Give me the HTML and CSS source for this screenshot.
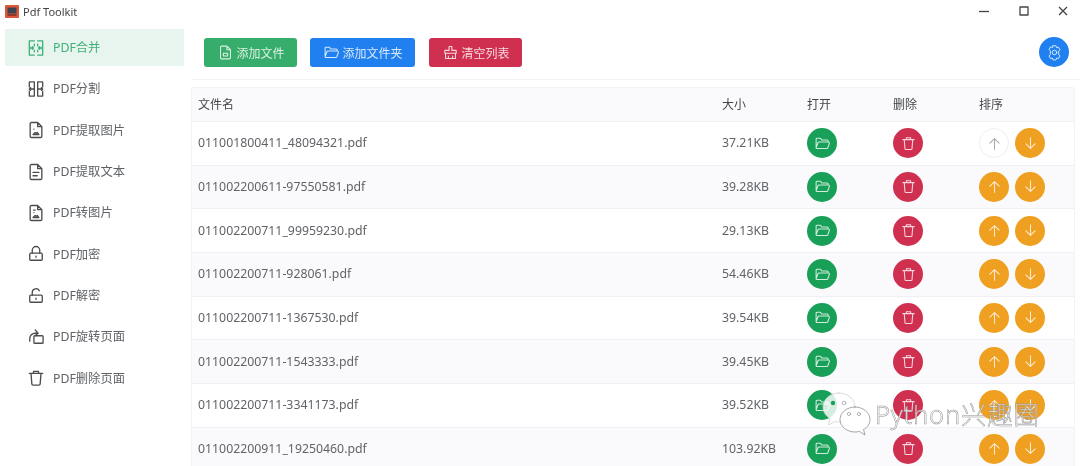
FILE: index.html
```html
<!DOCTYPE html>
<html lang="zh-CN">
<head>
<meta charset="utf-8">
<title>Pdf Toolkit</title>
<link rel="stylesheet" href="styles.css">
</head>
<body>
<svg class="defs" width="0" height="0">
  <symbol id="i-folder" viewBox="0 0 24 24"><path d="M3 18V6a1.5 1.5 0 0 1 1.5-1.5h4.2L11 7h7.5A1.5 1.5 0 0 1 20 8.5V10M3 18l2.6-7a1.5 1.5 0 0 1 1.4-1h13.5a1.3 1.3 0 0 1 1.2 1.8L19.500 18a1.600 1.600 0 0 1-1.500 1H4a1 1 0 0 1-1-1z"/></symbol>
  <symbol id="i-trash" viewBox="0 0 24 24"><path d="M4 6.500h16M9 6.500V4h6v2.500M6 6.500 7 19a1.500 1.500 0 0 0 1.500 1.500h7A1.500 1.500 0 0 0 17 19l1-12.500"/></symbol>
  <symbol id="i-up" viewBox="0 0 24 24"><path d="M12 20V5M5.500 11.500 12 5l6.500 6.500"/></symbol>
  <symbol id="i-down" viewBox="0 0 24 24"><path d="M12 4v15M5.500 12.500 12 19l6.500-6.500"/></symbol>
  <symbol id="i-file" viewBox="0 0 24 24"><path d="M14 3H6.500A1.500 1.500 0 0 0 5 4.500v15A1.500 1.500 0 0 0 6.500 21h11a1.500 1.500 0 0 0 1.500-1.500V8zM14 3v5h5"/></symbol>
</svg>

<div class="titlebar">
  <svg class="logo" viewBox="0 0 14 13"><rect width="14" height="13" rx="1" fill="#d9583c"/><rect x="2.500" y="2.500" width="9" height="6" fill="#3c4450"/><rect x="2.500" y="9" width="9" height="2" fill="#8d3a2c"/></svg>
  <span class="app-name">Pdf Toolkit</span>
  <div class="win-controls">
    <svg viewBox="0 0 10 10"><path d="M0 5.500h10"/></svg>
    <svg viewBox="0 0 10 10"><rect x="1" y="1" width="8" height="8"/></svg>
    <svg viewBox="0 0 10 10"><path d="M1 1l8 8M9 1l-8 8"/></svg>
  </div>
</div>

<div class="app">
  <nav class="sidebar">
    <a class="menu-item active">
      <svg class="menu-icon" viewBox="0 0 24 24"><path d="M10 3.500H4v17h6M14 3.500h6v17h-6M10 7.500v2M10 14.500v2M14 7.500v2M14 14.500v2M4 12h5M7.500 10.500 9 12l-1.500 1.500M20 12h-5M16.500 10.500 15 12l1.500 1.500"/></svg>
      <span>PDF合并</span>
    </a>
    <a class="menu-item">
      <svg class="menu-icon" viewBox="0 0 24 24"><path d="M10 3.500H4v6M4 14.500v6h6M14 3.500h6v6M20 14.500v6h-6M10 3.500v17M14 3.500v17M10 12H4M5.500 10.500 4 12l1.500 1.500M14 12h6M18.500 10.500 20 12l-1.500 1.500"/></svg>
      <span>PDF分割</span>
    </a>
    <a class="menu-item">
      <svg class="menu-icon" viewBox="0 0 24 24"><use href="#i-file"/><path d="M8.500 17.500l2.500-2.500 1.500 1 1-1 2 2.500zM9.500 11h.01"/></svg>
      <span>PDF提取图片</span>
    </a>
    <a class="menu-item">
      <svg class="menu-icon" viewBox="0 0 24 24"><use href="#i-file"/><path d="M8.500 12.500h7M8.500 16.500h5"/></svg>
      <span>PDF提取文本</span>
    </a>
    <a class="menu-item">
      <svg class="menu-icon" viewBox="0 0 24 24"><use href="#i-file"/><path d="M8.500 17.500l2.500-2.500 1.500 1 1-1 2 2.500zM9 8.500h2M9.500 11.500h.01"/></svg>
      <span>PDF转图片</span>
    </a>
    <a class="menu-item">
      <svg class="menu-icon" viewBox="0 0 24 24"><rect x="4.500" y="11" width="15" height="8.500" rx="1.200"/><path d="M7.500 11V7.500a4.500 4.500 0 0 1 9 0V11M12 14.500v1.500"/></svg>
      <span>PDF加密</span>
    </a>
    <a class="menu-item">
      <svg class="menu-icon" viewBox="0 0 24 24"><rect x="4.500" y="11" width="15" height="8.500" rx="1.200"/><path d="M7.500 11V7.500a4.500 4.500 0 0 1 8.500-1.800M12 14.500v1.500"/></svg>
      <span>PDF解密</span>
    </a>
    <a class="menu-item">
      <svg class="menu-icon" viewBox="0 0 24 24"><rect x="9.500" y="10.500" width="11" height="9" rx="1"/><path d="M4.500 17v-3a6.500 6.500 0 0 1 6.500-6.500h3M11 3.500l3.500 4-3.500 3"/></svg>
      <span>PDF旋转页面</span>
    </a>
    <a class="menu-item">
      <svg class="menu-icon" viewBox="0 0 24 24"><use href="#i-trash"/></svg>
      <span>PDF删除页面</span>
    </a>
  </nav>

  <main class="content">
    <div class="toolbar">
      <button class="btn btn-green"><svg class="btn-icon" viewBox="0 0 24 24"><use href="#i-file"/><path d="M9 13h6v4H9z"/></svg>添加文件</button>
      <button class="btn btn-blue"><svg class="btn-icon" viewBox="0 0 24 24"><use href="#i-folder"/></svg>添加文件夹</button>
      <button class="btn btn-red"><svg class="btn-icon" viewBox="0 0 24 24"><path d="M10 3.500h4V9h6v4H4V9h6zM5 13v7.500h14V13M9 20.500V17M15 20.500V17"/></svg>清空列表</button>
      <button class="settings"><svg class="gear" viewBox="0 0 24 24"><path d="M10 2.500h4l1 2.600 2.700-.5 2 3.400-1.800 2.100v4.800l1.800 2.100-2 3.400-2.700-.5-1 2.600h-4l-1-2.600-2.700.5-2-3.400 1.800-2.100V9.600L4.300 7.500l2-3.400 2.700.5z"/><circle cx="12" cy="12" r="3.200"/></svg></button>
    </div>

    <div class="table">
      <div class="row head"><div>文件名</div><div>大小</div><div>打开</div><div>删除</div><div>排序</div></div>

      <div class="row">
        <div class="name">011001800411_48094321.pdf</div><div class="size">37.21KB</div>
        <div><button class="circle green"><svg viewBox="0 0 24 24"><use href="#i-folder"/></svg></button></div>
        <div><button class="circle red"><svg viewBox="0 0 24 24"><use href="#i-trash"/></svg></button></div>
        <div class="sort"><button class="circle disabled"><svg viewBox="0 0 24 24"><use href="#i-up"/></svg></button><button class="circle orange"><svg viewBox="0 0 24 24"><use href="#i-down"/></svg></button></div>
      </div>
      <div class="row">
        <div class="name">011002200611-97550581.pdf</div><div class="size">39.28KB</div>
        <div><button class="circle green"><svg viewBox="0 0 24 24"><use href="#i-folder"/></svg></button></div>
        <div><button class="circle red"><svg viewBox="0 0 24 24"><use href="#i-trash"/></svg></button></div>
        <div class="sort"><button class="circle orange"><svg viewBox="0 0 24 24"><use href="#i-up"/></svg></button><button class="circle orange"><svg viewBox="0 0 24 24"><use href="#i-down"/></svg></button></div>
      </div>
      <div class="row">
        <div class="name">011002200711_99959230.pdf</div><div class="size">29.13KB</div>
        <div><button class="circle green"><svg viewBox="0 0 24 24"><use href="#i-folder"/></svg></button></div>
        <div><button class="circle red"><svg viewBox="0 0 24 24"><use href="#i-trash"/></svg></button></div>
        <div class="sort"><button class="circle orange"><svg viewBox="0 0 24 24"><use href="#i-up"/></svg></button><button class="circle orange"><svg viewBox="0 0 24 24"><use href="#i-down"/></svg></button></div>
      </div>
      <div class="row">
        <div class="name">011002200711-928061.pdf</div><div class="size">54.46KB</div>
        <div><button class="circle green"><svg viewBox="0 0 24 24"><use href="#i-folder"/></svg></button></div>
        <div><button class="circle red"><svg viewBox="0 0 24 24"><use href="#i-trash"/></svg></button></div>
        <div class="sort"><button class="circle orange"><svg viewBox="0 0 24 24"><use href="#i-up"/></svg></button><button class="circle orange"><svg viewBox="0 0 24 24"><use href="#i-down"/></svg></button></div>
      </div>
      <div class="row">
        <div class="name">011002200711-1367530.pdf</div><div class="size">39.54KB</div>
        <div><button class="circle green"><svg viewBox="0 0 24 24"><use href="#i-folder"/></svg></button></div>
        <div><button class="circle red"><svg viewBox="0 0 24 24"><use href="#i-trash"/></svg></button></div>
        <div class="sort"><button class="circle orange"><svg viewBox="0 0 24 24"><use href="#i-up"/></svg></button><button class="circle orange"><svg viewBox="0 0 24 24"><use href="#i-down"/></svg></button></div>
      </div>
      <div class="row">
        <div class="name">011002200711-1543333.pdf</div><div class="size">39.45KB</div>
        <div><button class="circle green"><svg viewBox="0 0 24 24"><use href="#i-folder"/></svg></button></div>
        <div><button class="circle red"><svg viewBox="0 0 24 24"><use href="#i-trash"/></svg></button></div>
        <div class="sort"><button class="circle orange"><svg viewBox="0 0 24 24"><use href="#i-up"/></svg></button><button class="circle orange"><svg viewBox="0 0 24 24"><use href="#i-down"/></svg></button></div>
      </div>
      <div class="row">
        <div class="name">011002200711-3341173.pdf</div><div class="size">39.52KB</div>
        <div><button class="circle green"><svg viewBox="0 0 24 24"><use href="#i-folder"/></svg></button></div>
        <div><button class="circle red"><svg viewBox="0 0 24 24"><use href="#i-trash"/></svg></button></div>
        <div class="sort"><button class="circle orange"><svg viewBox="0 0 24 24"><use href="#i-up"/></svg></button><button class="circle orange"><svg viewBox="0 0 24 24"><use href="#i-down"/></svg></button></div>
      </div>
      <div class="row">
        <div class="name">011002200911_19250460.pdf</div><div class="size">103.92KB</div>
        <div><button class="circle green"><svg viewBox="0 0 24 24"><use href="#i-folder"/></svg></button></div>
        <div><button class="circle red"><svg viewBox="0 0 24 24"><use href="#i-trash"/></svg></button></div>
        <div class="sort"><button class="circle orange"><svg viewBox="0 0 24 24"><use href="#i-up"/></svg></button><button class="circle orange"><svg viewBox="0 0 24 24"><use href="#i-down"/></svg></button></div>
      </div>
    </div>
  </main>
</div>

<div class="watermark">
  <svg class="wm-icon" viewBox="0 0 50 46">
    <path class="wm-back" d="M17 1C8 1 1 7.500 1 15c0 5 3 9 7 11.500L6.500 33l6.500-3.500c1.500.4 3 .6 5 .6C30 30 33 22 33 15 33 7.500 26 1 17 1z"/>
    <path class="wm-front" d="M33 15c-8 0-15 5.500-15 12.500S25 40 33 40c1.500 0 3-.2 4.500-.6L43 43l-1.500-5.500c4-2.300 6.500-5.700 6.500-10 0-7-7-12.500-15-12.500z"/>
    <circle class="wm-dot" cx="11" cy="11" r="2.200"/><circle class="wm-dot-light" cx="22" cy="11" r="1.800"/>
    <circle class="wm-dot-light" cx="27" cy="22" r="1.600"/><circle class="wm-dot-light" cx="37" cy="22" r="1.600"/>
  </svg>
  <span class="wm-text">Python兴趣圈</span>
</div>
</body>
</html>
```
FILE: styles.css
```css
* { box-sizing: border-box; }
html, body { margin: 0; height: 466px; overflow: hidden; background: #fff; }
body {
  position: relative;
  font-family: "Noto Sans", "Noto Sans CJK SC", sans-serif;
  font-size: 12.300px;
  color: #4a4d50;
  filter: blur(0.4px);
}
.defs { display: block; height: 0; }
svg { fill: none; stroke: currentColor; stroke-width: 1.800; stroke-linecap: round; stroke-linejoin: round; }

.titlebar { height: 23px; display: flex; align-items: center; padding: 0 0 1px 5px; }
.logo { width: 14px; height: 13px; stroke: none; margin-right: 4px; }
.app-name { font-size: 11px; color: #444; }
.win-controls { margin-left: auto; display: flex; gap: 29.500px; padding-right: 12px; color: #444; }
.win-controls svg { width: 10px; height: 10px; stroke-width: 1.300; stroke-linecap: butt; }

.app { display: flex; height: 443px; }
.sidebar { width: 191px; flex: none; padding: 6px 7px 0 5px; display: flex; flex-direction: column; gap: 4.350px; }
.menu-item { height: 37px; display: flex; align-items: center; padding: 0 0 1px 21px; gap: 7px; color: #5f6266; flex: none; }
.menu-item.active { background: #e7f5ee; color: #3fb07a; }
.menu-icon { width: 20px; height: 20px; color: #4d4d4d; stroke-width: 1.600; margin-top: 1px; }
.active .menu-icon { color: #3fb07a; }

.content { flex: 1; min-width: 0; padding-right: 5px; }
.toolbar { height: 57px; margin-right: -5px; padding: 15px 11px 0 13px; display: flex; align-items: flex-start; gap: 13px; border-bottom: 1px solid #f3f3f6; margin-bottom: 7px; }
.btn { height: 29px; border: 0; border-radius: 3px; padding: 0 12.500px; display: flex; align-items: center; gap: 3px; font: inherit; font-size: 12px; color: rgba(255,255,255,.82); }
.btn-icon { width: 17px; height: 17px; stroke-width: 1.500; }
.btn-green { background: #36ad6a; }
.btn-blue { background: #2080f0; }
.btn-red { background: #d03050; margin-left: 1px; }
.settings { margin-left: auto; margin-top: -1px; width: 30px; height: 30px; border: 0; border-radius: 50%; background: #2080f0; color: rgba(255,255,255,.8); display: flex; align-items: center; justify-content: center; padding: 0; }
.gear { width: 17px; height: 17px; stroke-width: 1.400; }

.table { border: 1px solid #f3f3f6; border-bottom: 0; border-radius: 3px 3px 0 0; }
.row { display: grid; grid-template-columns: 524px 85px 86px 86px 1fr; align-items: center; height: 43.670px; border-bottom: 1px solid #efeff5; }
.row > div { padding-left: 6px; }
.row:nth-child(odd) { background: #fafafc; }
.row.head { height: 34px; background: #fafafc; color: #44474a; font-size: 12px; padding-bottom: 2px; }
.name, .size { color: #606367; padding-bottom: 1px; }

.sort { display: flex; gap: 6px; }
.circle { width: 30px; height: 30px; border: 0; border-radius: 50%; padding: 0; display: flex; align-items: center; justify-content: center; color: rgba(255,255,255,.8); }
.circle svg { width: 17px; height: 17px; stroke-width: 1.500; }
.green { background: #18a058; }
.red { background: #d03050; }
.orange { background: #f0a020; }
.disabled { background: #fff; border: 1px solid #efeff5; color: #aaa; }

.watermark { position: absolute; left: 822px; top: 392px; display: flex; align-items: center; gap: 3px; }
.wm-icon { width: 50px; height: 46px; stroke: #8f8f8f; stroke-width: .8; flex: none; }
.wm-back { fill: rgba(255,255,255,.82); stroke: #d0d0d0; }
.wm-front { fill: rgba(255,255,255,.95); }
.wm-dot { fill: #18a058; stroke: none; }
.wm-dot-light { fill: none; stroke: #9a9a9a; stroke-width: .7; }
.wm-text { font-size: 25.500px; font-weight: 300; letter-spacing: .8px; line-height: 34px; padding-bottom: 3px; color: rgba(255,255,255,.8); -webkit-text-stroke: .5px #8f8f8f; white-space: nowrap; }
```
